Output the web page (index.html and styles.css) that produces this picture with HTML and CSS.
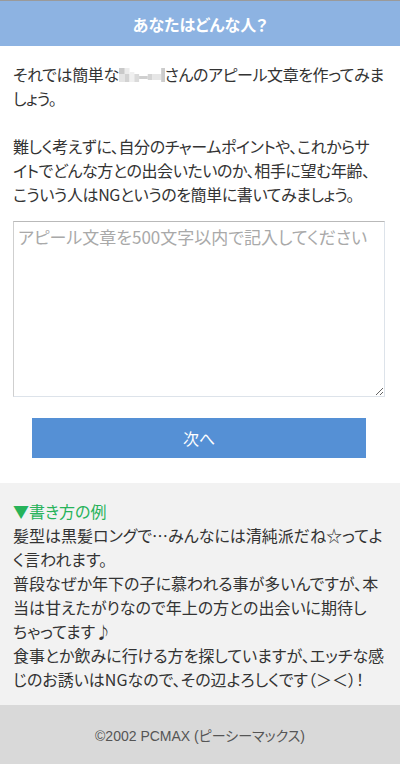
FILE: index.html
```html
<!DOCTYPE html>
<html lang="ja">
<head>
<meta charset="utf-8">
<title>あなたはどんな人？</title>
<link rel="stylesheet" href="styles.css">
</head>
<body>
<header class="hdr">あなたはどんな人？</header>
<main class="main">
  <p class="lead">それでは簡単な<svg class="mosaic" width="46" height="14" viewBox="0 0 48 14" preserveAspectRatio="none"><rect x="0" y="0" width="6" height="6" fill="#c9c9c9"/><rect x="0" y="6" width="6" height="8" fill="#e4e4e4"/><rect x="6" y="0" width="5" height="6" fill="#ececec"/><rect x="6" y="6" width="5" height="8" fill="#d2d2d2"/><rect x="11" y="4" width="5" height="10" fill="#f0f0f0"/><rect x="16" y="6" width="5" height="8" fill="#dadada"/><rect x="21" y="8" width="9" height="3" fill="#cfcfcf"/><rect x="30" y="6" width="5" height="6" fill="#d4d4d4"/><rect x="35" y="6" width="9" height="6" fill="#e6e6e6"/><rect x="44" y="0" width="4" height="14" fill="#cccccc"/></svg>さんのアピール文章を作ってみま<br>しょう。<br><br>難しく考えずに、自分のチャームポイントや、これからサ<br>イトでどんな方との出会いたいのか、相手に望む年齢、<br>こういう人はNGというのを簡単に書いてみましょう。</p>
  <textarea class="box" placeholder="アピール文章を500文字以内で記入してください"></textarea>
  <button class="next" type="button">次へ</button>
</main>
<section class="example">
  <div class="ex-title">▼書き方の例</div>
  <p class="ex-text">髪型は黒髪ロングで…みんなには清純派だね☆ってよ<br>く言われます。<br>普段なぜか年下の子に慕われる事が多いんですが、本<br>当は甘えたがりなので年上の方との出会いに期待し<br>ちゃってます♪<br>食事とか飲みに行ける方を探していますが、エッチな感<br>じのお誘いはNGなので、その辺よろしくです（＞＜）！</p>
</section>
<footer class="foot">©2002 PCMAX (ピーシーマックス)</footer>
</body>
</html>
```
FILE: styles.css
```css
html, body {
  margin: 0;
  padding: 0;
  background: #fff;
}
body {
  font-family: "Noto Sans CJK JP", "Noto Sans", sans-serif;
  color: #333;
  font-size: 16px;
  line-height: 24px;
  font-feature-settings: "palt";
}
.hdr {
  border-top: 1px solid #9a9a9a;
  background: #8db3e2;
  height: 45px;
  display: flex;
  align-items: center;
  justify-content: center;
  color: #fff;
  font-weight: bold;
  font-size: 16px;
}
.main {
  padding: 0 13px 25px;
  display: flex;
  flex-direction: column;
}
.lead {
  margin: 16px 0 0;
  letter-spacing: -0.4px;
  white-space: nowrap;
}
.mosaic {
  vertical-align: -1px;
}
.box {
  margin-top: 15px;
  width: 372px;
  height: 176px;
  box-sizing: border-box;
  border: 1px solid;
  border-color: #b9b9b9 #dde3ea #dde3ea #cfcfcf;
  padding: 3px 4px;
  font-family: "Noto Sans CJK JP", sans-serif;
  font-feature-settings: "palt";
  font-size: 17px;
  line-height: 24px;
  color: #333;
  resize: vertical;
}
.box::placeholder {
  color: #a9a9a9;
}
.next {
  margin: 21px 0 0 19px;
  width: 334px;
  height: 40px;
  border: 0;
  background: #5590d5;
  color: #fff;
  font-family: "Noto Sans CJK JP", sans-serif;
  font-size: 16px;
  font-feature-settings: "palt";
}
.example {
  background: #f2f2f2;
  padding: 16px 13px 14px;
}
.ex-title {
  color: #27b35a;
}
.ex-text {
  margin: 0;
  white-space: nowrap;
}
.foot {
  background: #d9d9d9;
  height: 59px;
  display: flex;
  align-items: center;
  justify-content: center;
  font-family: "Liberation Sans", "Noto Sans CJK JP", sans-serif;
  font-size: 14px;
  color: #555;
  padding-top: 2px;
  box-sizing: border-box;
}
```
